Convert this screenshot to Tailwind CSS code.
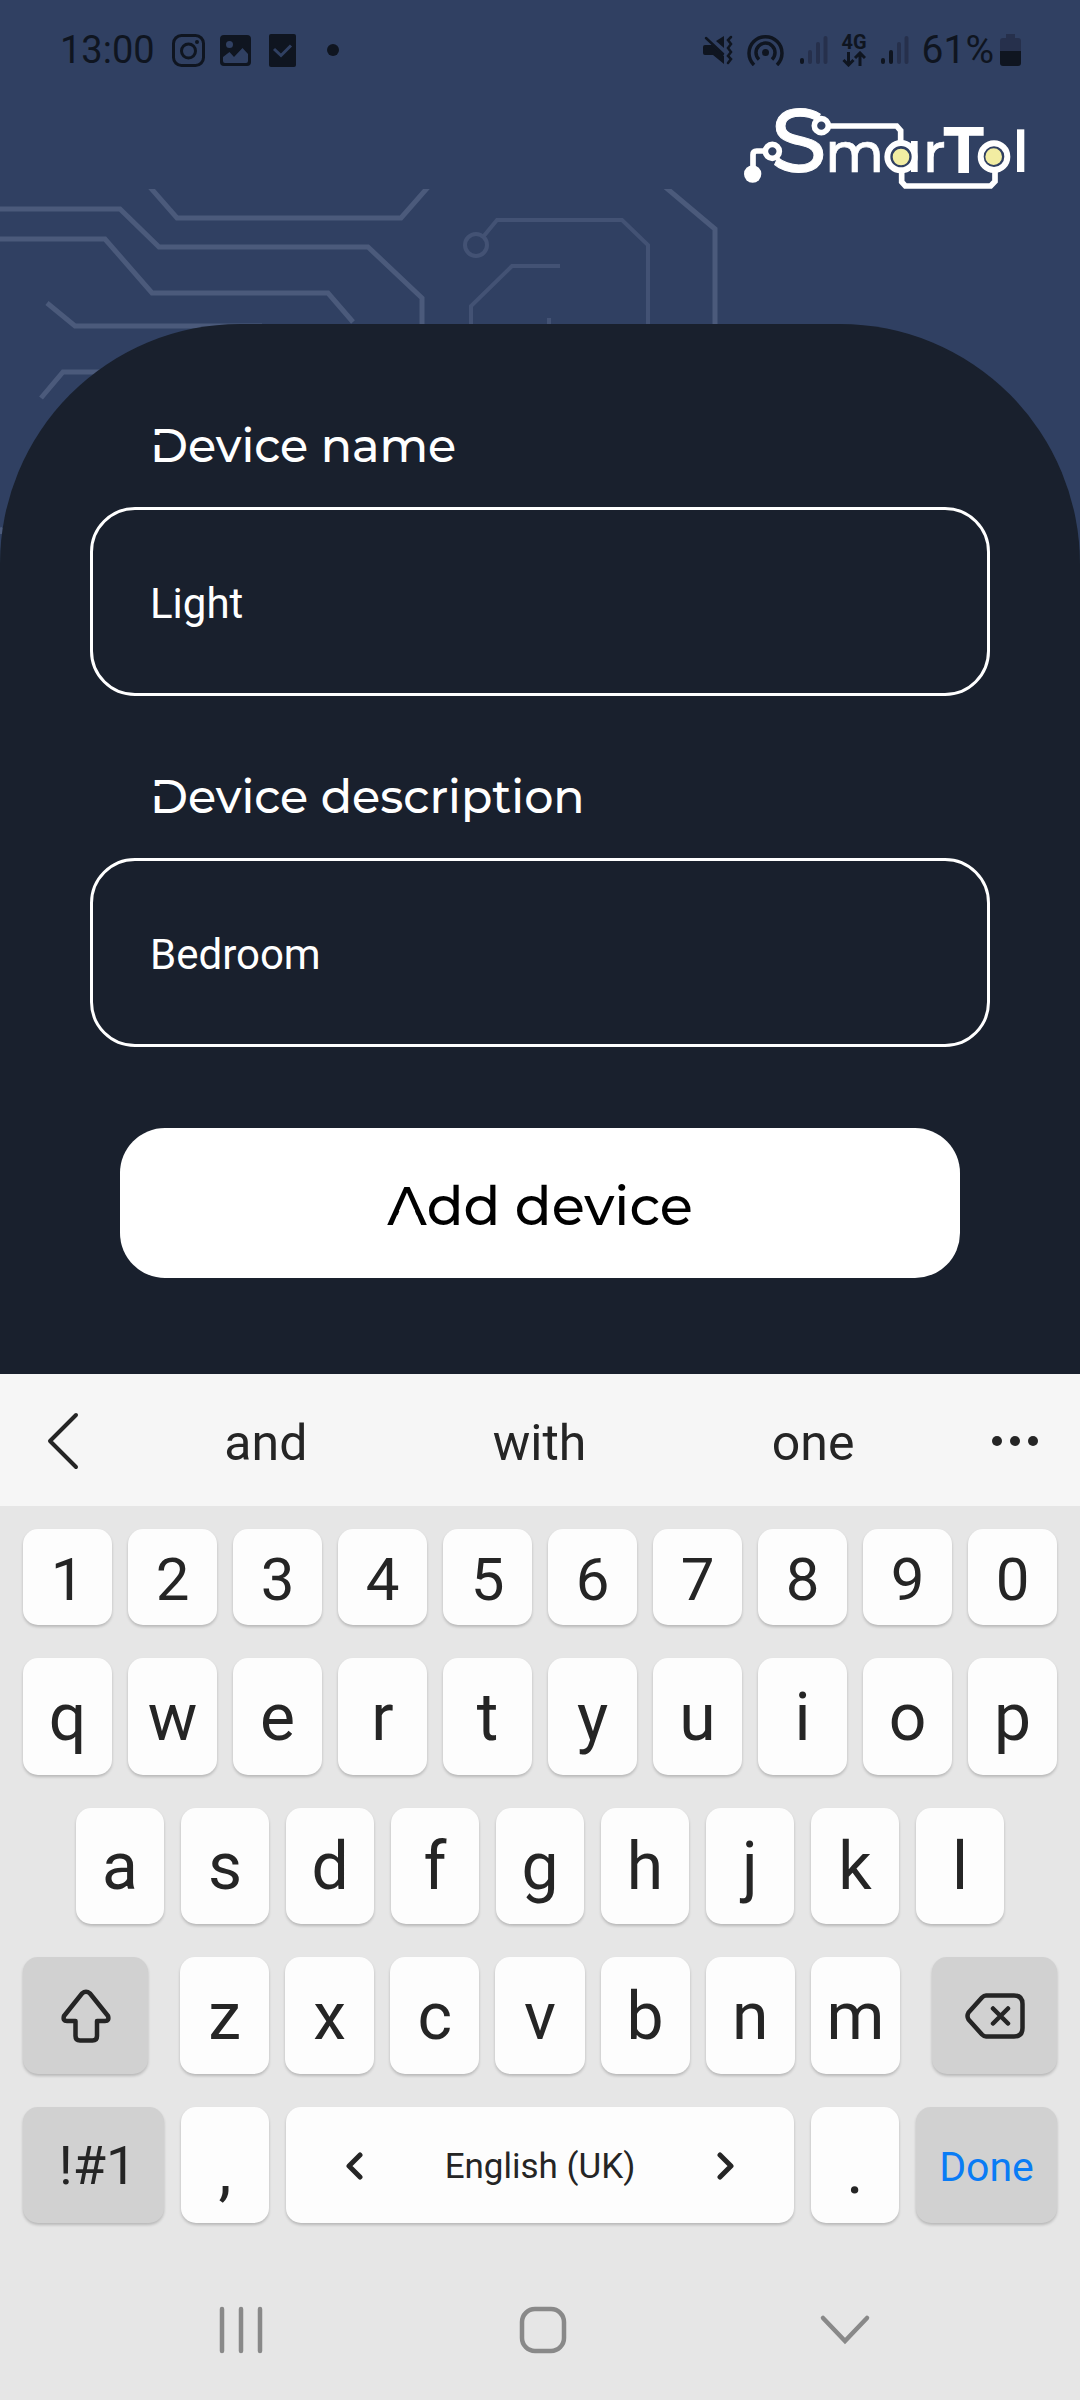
<!DOCTYPE html>
<html lang="en">
<head>
<meta charset="utf-8">
<meta name="viewport" content="width=device-width, initial-scale=1">
<title>SmarTol – Add device</title>
<script src="https://cdn.jsdelivr.net/npm/@tailwindcss/browser@4"></script>
</head>
<body class="min-h-screen flex flex-col bg-[#304062] font-[Roboto,sans-serif]">

<header class="relative h-[324px] text-[#0f1520]">
  <!-- circuit traces -->
  <svg class="absolute left-0 top-[189px] w-[1080px] h-[345px]" viewBox="0 189 1080 345" fill="none" stroke="#4b5a7b" stroke-width="5" aria-hidden="true">
    <path d="M149 186L177 218H401L429 186M0 209H120L159 247H368L422 298V334M0 239H105L152 293H328L353 322M47 303L75 326H262M41 398L63 372H120M-2 536L3 528M664 186L715 229V334"/>
    <g stroke-width="4" stroke="#435274"><circle cx="476" cy="245" r="11"/><path d="M483 237L497 220H622L648 245V334M471 334V306L512 266H560M549 318V334"/></g>
  </svg>

  <div class="relative flex items-center justify-between h-[100px] pl-[60px] pr-[59px] text-[38px] leading-[44px]">
    <div class="flex items-center">
      <time>13:00</time>
      <svg class="ml-[17px] size-[33px]" viewBox="0 0 33 33" fill="none" stroke="currentColor" stroke-width="3"><rect x="1.500" y="1.500" width="30" height="30" rx="8"/><circle cx="16.500" cy="17" r="7"/><circle cx="25" cy="8" r="2" fill="currentColor" stroke="none"/></svg>
      <svg class="ml-[15px] size-[31px]" viewBox="0 0 31 31"><path fill="currentColor" fill-rule="evenodd" d="M4 0H27Q31 0 31 4V27Q31 31 27 31H4Q0 31 0 27V4Q0 0 4 0ZM9.500 6A3.500 3.500 0 1 0 9.500 13A3.500 3.500 0 1 0 9.500 6ZM3 22V26Q3 28 5 28H26Q28 28 28 26V19L22.500 13L14 22L9.500 17Z"/></svg>
      <svg class="ml-[18px] w-[27px] h-[33px]" viewBox="0 0 27 33"><rect width="27" height="33" rx="2" fill="currentColor"/><path d="M5 15L12 21.500L22 11.500" fill="none" stroke="#304062" stroke-width="3"/></svg>
      <span class="ml-[31px] size-3 rounded-full bg-[#0f1520]"></span>
    </div>
    <div class="flex items-center">
      <svg class="w-[30px] h-[30px]" viewBox="0 0 30 30" fill="currentColor"><path d="M0 12Q0 10 2 10H9L21 21V29L10 20H2Q0 20 0 18Z"/><path d="M13 6L21 1V13Z"/><path d="M3 3L20 19M28 2L25 5L28 9L25 13L28 17L25 21L28 24L25 28" fill="none" stroke="currentColor" stroke-width="2.500" stroke-linecap="round"/></svg>
      <svg class="ml-[14px] w-[37px] h-[32px]" viewBox="0 0 37 32" fill="none" stroke="currentColor" stroke-width="3.500"><path d="M7 31A16.500 16.500 0 1 1 30 31M12 25.500A9.500 9.500 0 1 1 25 25.500"/><circle cx="18.500" cy="18.500" r="3.500" fill="currentColor" stroke="none"/></svg>
      <svg class="ml-4 w-7 h-[30px]" viewBox="0 0 28 30" fill="none" stroke="#26304c" stroke-width="4" stroke-linecap="round"><path d="M10 17V27M18 9V27M25.500 3V27"/><path d="M2 25V27" stroke="#0f1520"/></svg>
      <span class="ml-[13px] flex flex-col items-center text-[20px] leading-[18px] font-bold">4G
        <svg class="w-6 h-4" viewBox="0 0 24 16" fill="none" stroke="currentColor" stroke-width="3"><path d="M6.500 1V14M1.500 9L6.500 14L11.500 9M18 15V2M13 7L18 2L23 7"/></svg>
      </span>
      <svg class="ml-[14px] w-7 h-[30px]" viewBox="0 0 28 30" fill="none" stroke="#26304c" stroke-width="4" stroke-linecap="round"><path d="M18 9V27M25.500 3V27"/><path d="M2 25V27M10 17V27" stroke="#0f1520"/></svg>
      <span class="ml-[13px] text-[39px]">61%</span>
      <svg class="ml-[6px] w-[21px] h-[32px]" viewBox="0 0 21 32"><path fill="#26304c" d="M6 0H15V4H18Q21 4 21 7V17H0V7Q0 4 3 4H6Z"/><path fill="currentColor" d="M0 17H21V29Q21 32 18 32H3Q0 32 0 29Z"/></svg>
    </div>
  </div>

  <div class="relative flex justify-end pt-[6px] pr-[54px]">
    <svg class="w-[282px] h-[84px] overflow-visible" viewBox="72 48 846 252" fill="#fff" font-family="Montserrat, Inter, sans-serif" role="img" aria-label="SmarTol">
      <text x="236" y="246" font-size="268" font-weight="500" stroke="#fff" stroke-width="3" text-anchor="middle">S</text>
      <text x="404" y="245" font-size="168" font-weight="500" stroke="#fff" stroke-width="2" text-anchor="middle">m</text>
      <text x="608" y="245" font-size="168" font-weight="500" stroke="#fff" stroke-width="2">r</text>
      <text x="731" y="250" font-size="196" font-weight="700" text-anchor="middle">T</text>
      <text x="902" y="245" font-size="174" font-weight="600" text-anchor="middle">l</text>
      <g fill="none" stroke="#fff" stroke-width="17">
        <path d="M328 108H530L542 122V160M99 240V194Q99 183 110 183H134"/>
        <path d="M545 240V276L556 288H812L825 274V240"/>
        <path d="M583 153V246" stroke-width="20"/>
        <g fill="#304062"><circle cx="304" cy="107" r="21"/><circle cx="157" cy="184" r="21"/></g>
        <g fill="#304062" stroke-width="18"><circle cx="543" cy="200" r="41"/><circle cx="822" cy="200" r="40"/></g>
      </g>
      <circle cx="98" cy="252" r="26"/>
      <g fill="#f2eda2"><circle cx="543" cy="201" r="25"/><circle cx="821" cy="200" r="25"/></g>
    </svg>
  </div>
</header>

<main class="relative grow rounded-t-[240px] bg-[#19202d] px-[90px] pt-[92px] pb-24">
  <form class="flex flex-col">
    <label for="name" class="pl-[60px] text-[46px] leading-[60px] font-medium text-white font-[Montserrat,DejaVu_Sans,sans-serif]"><span class="relative">D<span class="absolute left-0 top-[18px] w-[12px] h-[10px] bg-[#19202d]"></span></span>evice name</label>
    <input id="name" type="text" value="Light" class="mt-[31px] h-[189px] w-full rounded-[45px] border-3 border-white bg-transparent px-[57px] pt-1 text-[42px] text-white outline-none">
    <label for="desc" class="mt-[71px] pl-[60px] text-[46px] leading-[60px] font-medium text-white font-[Montserrat,DejaVu_Sans,sans-serif]"><span class="relative">D<span class="absolute left-0 top-[18px] w-[12px] h-[10px] bg-[#19202d]"></span></span>evice description</label>
    <input id="desc" type="text" value="Bedroom" class="mt-[31px] h-[189px] w-full rounded-[45px] border-3 border-white bg-transparent px-[57px] pt-1 text-[42px] text-white outline-none">
    <button type="button" class="mt-[81px] mx-[30px] h-[150px] pt-[6px] rounded-[45px] bg-white text-[54px] font-medium text-black font-[Montserrat,DejaVu_Sans,sans-serif]"><span class="relative">A<span class="absolute left-[8px] top-[36px] w-[24px] h-[11px] bg-white [clip-path:polygon(22%_0,78%_0,97%_100%,3%_100%)]"></span></span>dd device</button>
  </form>
</main>

<section aria-label="Keyboard" class="bg-[#e6e6e6] text-[#252525]">
  <div class="flex h-[132px] pt-[2px] bg-[#f6f6f6] text-[50px]">
    <button aria-label="Back" class="w-[129px] pr-1 flex items-center justify-center"><svg class="w-8 h-[58px]" viewBox="0 0 32 58" fill="none" stroke="currentColor" stroke-width="4" stroke-linecap="round" stroke-linejoin="round"><path d="M29 3L3 29L29 55"/></svg></button>
    <button class="flex-1 pt-1">and</button>
    <button class="flex-1 pt-1">with</button>
    <button class="flex-1 pt-1">one</button>
    <button aria-label="More" class="w-[130px] flex items-center justify-center"><svg class="w-[46px] h-[10px]" viewBox="0 0 46 10" fill="currentColor"><circle cx="5" cy="5" r="5"/><circle cx="23" cy="5" r="5"/><circle cx="41" cy="5" r="5"/></svg></button>
  </div>

  <div class="flex flex-col gap-[33px] px-[23px] pt-[23px] text-[66px] leading-none [&_button]:rounded-[15px] [&_button]:bg-[#fdfdfd] [&_button]:shadow-[0_2px_3px_rgba(0,0,0,0.2)]">
    <div class="grid grid-cols-10 gap-4 h-[96px] text-[60px] [&>button]:pt-[6px]">
      <button>1</button><button>2</button><button>3</button><button>4</button><button>5</button><button>6</button><button>7</button><button>8</button><button>9</button><button>0</button>
    </div>
    <div class="grid grid-cols-10 gap-4 h-[117px] [&>button]:pt-[2px]">
      <button>q</button><button>w</button><button>e</button><button>r</button><button>t</button><button>y</button><button>u</button><button>i</button><button>o</button><button>p</button>
    </div>
    <div class="grid grid-cols-9 gap-[17px] h-[116px] px-[53px] [&>button]:pt-[2px]">
      <button>a</button><button>s</button><button>d</button><button>f</button><button>g</button><button>h</button><button>j</button><button>k</button><button>l</button>
    </div>
    <div class="flex gap-8 h-[117px] [&_.alt]:bg-[#d1d1d1]">
      <button aria-label="Shift" class="alt w-[125px] flex items-center justify-center"><svg class="w-[50px] h-[54px]" viewBox="0 0 50 54" fill="none" stroke="currentColor" stroke-width="4.500" stroke-linejoin="round"><path d="M21 4.500Q25 1 29 4.500L47 27Q48.500 32 44 32H36V47Q36 51.500 31.500 51.500H19Q14.500 51.500 14.500 47V32H6Q1.500 32 3 27Z"/></svg></button>
      <div class="grid grid-cols-7 gap-4 grow [&>button]:pt-[2px]">
        <button>z</button><button>x</button><button>c</button><button>v</button><button>b</button><button>n</button><button>m</button>
      </div>
      <button aria-label="Backspace" class="alt w-[125px] flex items-center justify-center"><svg class="w-[60px] h-[46px]" viewBox="0 0 60 46" fill="none" stroke="currentColor" stroke-width="4.500" stroke-linecap="round" stroke-linejoin="round"><path d="M21 2.500H49Q57.500 2.500 57.500 11V35Q57.500 43.500 49 43.500H21Q19 43.500 17 41.500L3.500 26.500Q1.500 23 3.500 19.500L17 4.500Q19 2.500 21 2.500ZM28 15.500L43 30.500M43 15.500L28 30.500"/></svg></button>
    </div>
    <div class="flex gap-[17px] h-[116px] [&_.alt]:bg-[#d1d1d1]">
      <button class="alt w-[141px] pl-2 pt-[2px] text-[54px]">!#1</button>
      <button class="w-[88px] pt-3">,</button>
      <button class="grow flex items-center justify-between px-[58px] pt-[2px] text-[35px]">
        <svg class="w-5 h-7" viewBox="0 0 20 28" fill="none" stroke="currentColor" stroke-width="5" stroke-linecap="round" stroke-linejoin="round"><path d="M16 3L5 14L16 25"/></svg>
        English (UK)
        <svg class="w-5 h-7" viewBox="0 0 20 28" fill="none" stroke="currentColor" stroke-width="5" stroke-linecap="round" stroke-linejoin="round"><path d="M4 3L15 14L4 25"/></svg>
      </button>
      <button class="w-[88px] pt-3">.</button>
      <button class="alt w-[141px] pt-1 text-[41px] text-[#0a7cf5]">Done</button>
    </div>
  </div>

  <nav aria-label="System" class="grid grid-cols-3 h-[177px] pl-[90px] pr-[84px] pt-[36px] text-[#898989] [&>button]:flex [&>button]:items-center [&>button]:justify-center">
    <button aria-label="Recent apps"><svg class="w-[46px] h-[50px]" viewBox="0 0 46 50" fill="none" stroke="currentColor" stroke-width="4.500" stroke-linecap="round"><path d="M4 4V46M23 4V46M42 4V46"/></svg></button>
    <button aria-label="Home"><svg class="w-[50px] h-[50px]" viewBox="0 0 50 50" fill="none" stroke="currentColor" stroke-width="4.500"><rect x="4" y="4" width="42" height="42" rx="13"/></svg></button>
    <button aria-label="Hide keyboard"><svg class="w-[52px] h-[32px]" viewBox="0 0 52 32" fill="none" stroke="currentColor" stroke-width="4.500" stroke-linecap="round"><path d="M4 4L26 27L48 4"/></svg></button>
  </nav>
</section>
</body>
</html>
